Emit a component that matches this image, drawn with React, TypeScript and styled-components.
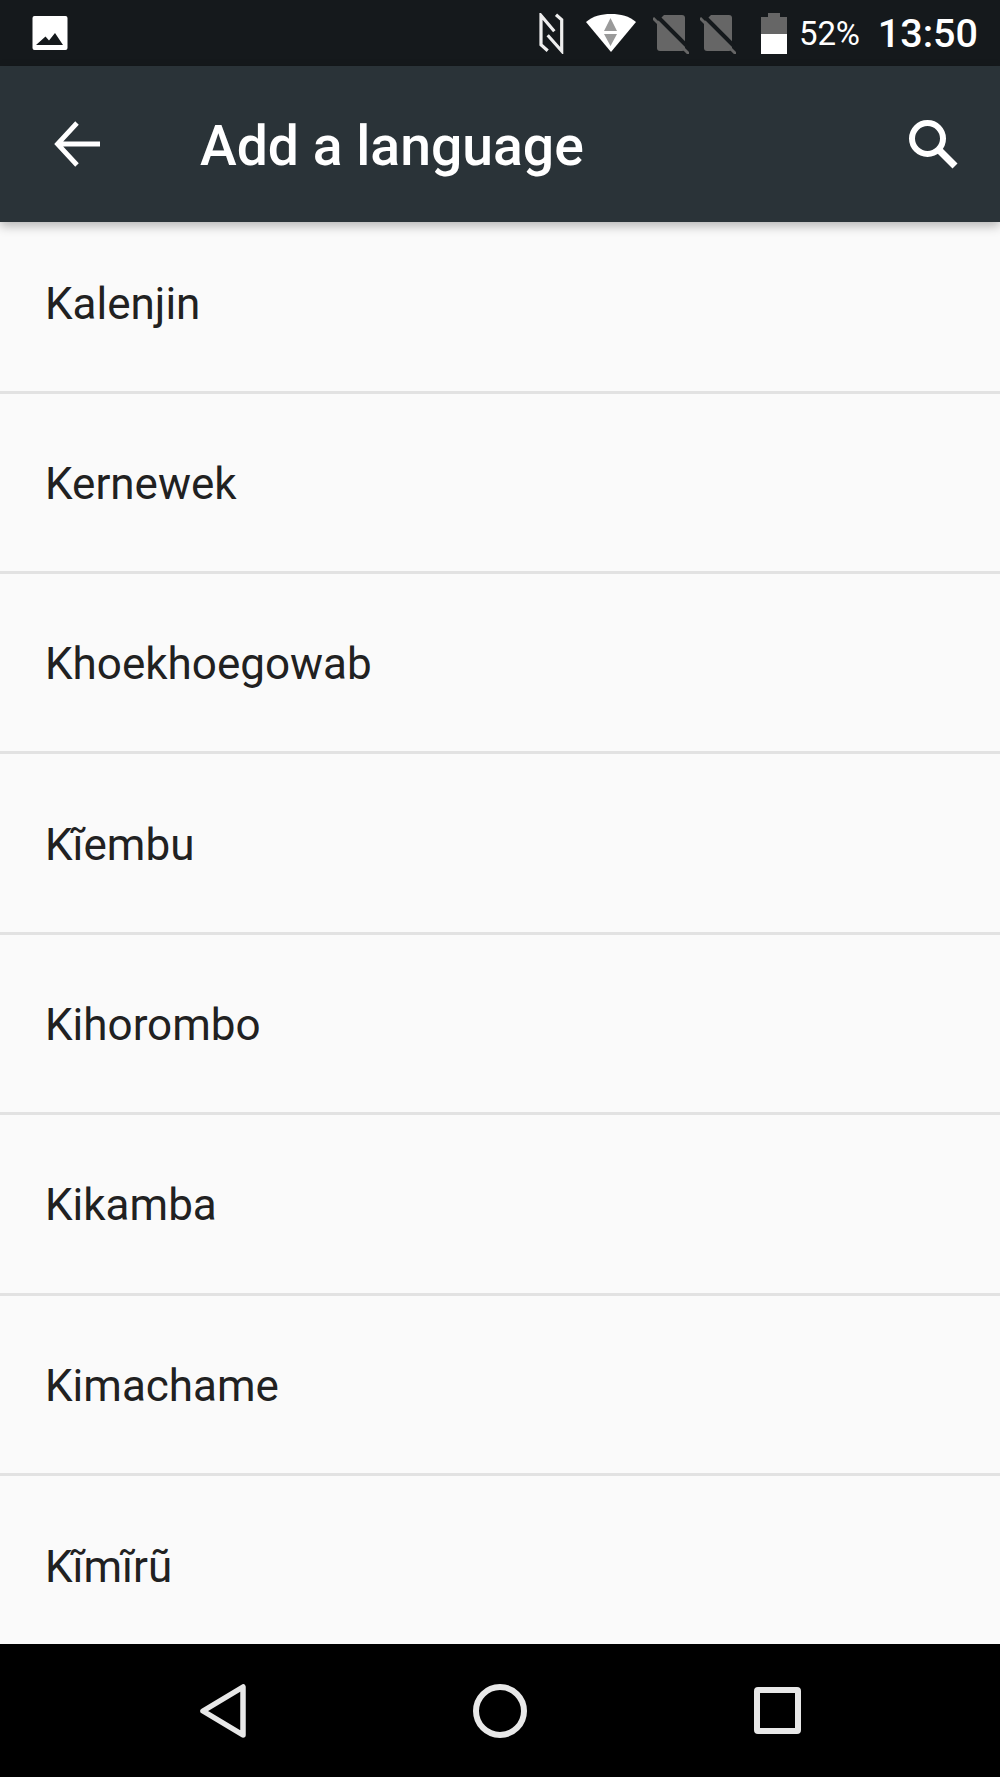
import React from "react";
import styled, { createGlobalStyle } from "styled-components";

const Global = createGlobalStyle`
  html, body { margin: 0; padding: 0; background: #fafafa; }
  body { font-family: Roboto, "Noto Sans", sans-serif; }
`;

const Screen = styled.div`
  width: 1000px;
  height: 1777px;
  display: flex;
  flex-direction: column;
  overflow: hidden;
  background: #fafafa;
`;

const StatusBar = styled.div`
  height: 66px;
  flex: none;
  background: #15191c;
  display: flex;
  align-items: center;
  padding: 0 22px 0 32px;
  color: #fff;
`;

const StatusRight = styled.div`
  margin-left: auto;
  display: flex;
  align-items: center;
`;

const Percent = styled.span`
  font-size: 33px;
  margin-left: 12px;
  letter-spacing: -0.2px;
`;

const Clock = styled.span`
  font-size: 39.5px;
  font-weight: 500;
  margin-left: 18px;
`;

const Toolbar = styled.header`
  height: 156px;
  flex: none;
  background: #2a3338;
  display: flex;
  align-items: center;
  padding: 0 42px 0 54px;
  color: #fff;
  box-shadow: 0 4px 10px rgba(0, 0, 0, 0.28);
  position: relative;
  z-index: 1;
`;

const Title = styled.h1`
  margin: 6px 0 0 100px;
  font-size: 55.3px;
  font-weight: 500;
  line-height: 1;
  letter-spacing: 0;
`;

const ToolbarEnd = styled.div`
  margin-left: auto;
  display: flex;
`;

const List = styled.ul`
  flex: 1;
  margin: 0;
  padding: 0;
  list-style: none;
  overflow: hidden;
`;

const Row = styled.li<{ $last?: boolean }>`
  height: 180.45px;
  box-sizing: border-box;
  display: flex;
  align-items: center;
  padding: ${(p) => (p.$last ? "1px" : "3px")} 45px 0;
  font-size: 44px;
  color: #212121;
  border-bottom: ${(p) => (p.$last ? "0" : "3px solid #e2e2e2")};

  &:first-child {
    height: 171.5px;
    padding-top: 0;
    padding-bottom: 5px;
  }
`;

const NavBar = styled.nav`
  height: 133px;
  flex: none;
  background: #000;
  display: flex;
  align-items: center;
  justify-content: center;
  gap: 227px;
`;

const Icon = styled.svg<{ $ml?: number }>`
  display: block;
  flex: none;
  margin-left: ${(p) => p.$ml ?? 0}px;
`;

const languages = [
  "Kalenjin",
  "Kernewek",
  "Khoekhoegowab",
  "Kĩembu",
  "Kihorombo",
  "Kikamba",
  "Kimachame",
  "Kĩmĩrũ",
];

const SimOff = ({ ml }: { ml: number }) => (
  <Icon $ml={ml} width="36" height="41" viewBox="0 0 36 41">
    <path fill="#666" d="M11 2h18a3 3 0 0 1 3 3v30a3 3 0 0 1-3 3H7a3 3 0 0 1-3-3V9z" />
    <path stroke="#15191c" strokeWidth="4" d="M3 2l33 33" />
    <path stroke="#666" strokeWidth="3" d="M0 5l36 36" />
  </Icon>
);

export default function App() {
  return (
    <>
      <Global />
      <Screen>
        <StatusBar>
          <Icon width="36" height="36" viewBox="0 0 36 36">
            <path
              fillRule="evenodd"
              fill="#fff"
              d="M2.5 1h31a2 2 0 0 1 2 2v30a2 2 0 0 1-2 2h-31a2 2 0 0 1-2-2V3a2 2 0 0 1 2-2zM4 30h27l-8-12-6 7.500-3.500-4z"
            />
          </Icon>
          <StatusRight>
            <Icon width="26" height="41" viewBox="0 0 26 41" fill="none" stroke="#eeeeee" strokeWidth="3.2">
              <path d="M9.700 37.700 3 31.700V2.500L16.300 18.300" />
              <path d="M18 1.700 23.700 6.700V38L9.700 22.300" />
            </Icon>
            <Icon $ml={22} width="50" height="40" viewBox="0 0 50 40">
              <path fill="#fff" d="M0 9C7 3 15 1 25 1s18 2 25 8L25 39z" />
              <path fill="#9a9a9a" d="M24.500 5l6.500 13H18zM18 21h13l-6.500 12z" />
            </Icon>
            <SimOff ml={17} />
            <SimOff ml={11} />
            <Icon $ml={25} width="26" height="41" viewBox="0 0 26 41">
              <path fill="#666" d="M7 0h12v4h7v17H0V4h7z" />
              <path fill="#fff" d="M0 21h26v20H0z" />
            </Icon>
            <Percent>52%</Percent>
            <Clock>13:50</Clock>
          </StatusRight>
        </StatusBar>
        <Toolbar>
          <Icon width="46" height="46" viewBox="0 0 46 46" fill="none" stroke="#fff" strokeWidth="4.800">
            <path d="M46 23H3M23 2 3.500 23 23 44" />
          </Icon>
          <Title>Add a language</Title>
          <ToolbarEnd>
            <Icon width="50" height="50" viewBox="0 0 50 50" fill="none" stroke="#fff" strokeWidth="6">
              <circle cx="19.500" cy="19.500" r="15.500" />
              <path d="M30 30 47 47" strokeWidth="7" />
            </Icon>
          </ToolbarEnd>
        </Toolbar>
        <List>
          {languages.map((l, i) => (
            <Row key={l} $last={i === languages.length - 1}>
              {l}
            </Row>
          ))}
        </List>
        <NavBar>
          <Icon width="46" height="54" viewBox="0 0 46 54" fill="none" stroke="#e8e8e8" strokeWidth="5.500" strokeLinejoin="round">
            <path d="M43 3v48L3 27z" />
          </Icon>
          <Icon width="54" height="54" viewBox="0 0 54 54" fill="none" stroke="#e8e8e8" strokeWidth="6">
            <circle cx="27" cy="27" r="24" />
          </Icon>
          <Icon width="47" height="47" viewBox="0 0 47 47" fill="none" stroke="#e8e8e8" strokeWidth="6" strokeLinejoin="round">
            <rect x="3" y="3" width="41" height="41" rx="1" />
          </Icon>
        </NavBar>
      </Screen>
    </>
  );
}
